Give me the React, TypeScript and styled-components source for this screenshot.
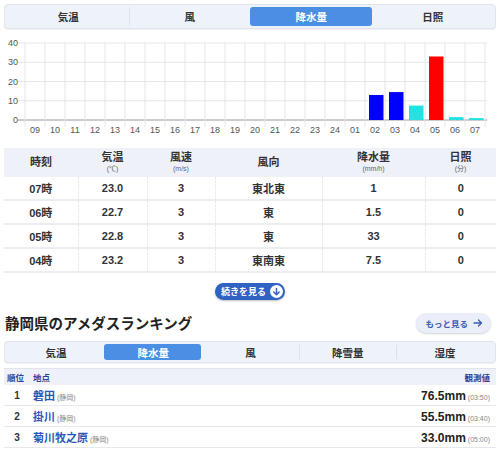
import React from "react";
import styled, { createGlobalStyle } from "styled-components";

const GlobalStyle = createGlobalStyle`
  body {
    margin: 0;
    background: #fff;
    color: #333;
    font-family: "Liberation Sans", "Noto Sans CJK JP", sans-serif;
  }
`;

const Page = styled.div`
  width: 492px;
  padding: 4px;
`;

const TabBar = styled.div<{ $height: number }>`
  display: flex;
  height: ${(p) => p.$height}px;
  box-sizing: border-box;
  padding: 2px;
  background: #eef2f9;
  border: 1px solid #dfe4ee;
  border-radius: 4px;
  box-shadow: 0 1px 1px rgba(0, 0, 0, 0.06);
`;

const Tab = styled.div<{ $active?: boolean; $sep?: boolean }>`
  flex: 1;
  display: flex;
  align-items: center;
  justify-content: center;
  font-size: 10.5px;
  font-weight: bold;
  color: ${(p) => (p.$active ? "#fff" : "#333")};
  background: ${(p) => (p.$active ? "#4a8fe4" : "transparent")};
  border-radius: 3px;
  border-left: 1px solid ${(p) => (p.$sep ? "#dde3ee" : "transparent")};
`;

const Chart = styled.svg`
  display: block;
  width: 492px;
  height: 111px;
`;

const DataTable = styled.table`
  width: 492px;
  margin-top: 8px;
  border-collapse: collapse;
  table-layout: fixed;
`;

const HeadCell = styled.th<{ width: number }>`
  width: ${(p) => p.width}px;
  height: 29px;
  padding: 0;
  background: #eef1f8;
  font-size: 11px;
  font-weight: bold;
  color: #333;
  line-height: 11px;
  text-align: center;
`;

const Unit = styled.div`
  margin-top: 2px;
  font-size: 7px;
  font-weight: normal;
  color: #666;
  line-height: 8px;
`;

const Cell = styled.td`
  height: 22px;
  padding: 0;
  font-size: 11px;
  font-weight: bold;
  color: #333;
  text-align: center;
  border-bottom: 2px solid #eceef2;
  & + & {
    border-left: 1px dotted #e2e2e2;
  }
`;

const ButtonRow = styled.div`
  display: flex;
  justify-content: center;
  margin-top: 10px;
`;

const MoreButton = styled.div`
  display: inline-flex;
  align-items: center;
  gap: 4px;
  height: 17px;
  padding: 0 2px 0 6px;
  background: #2f62c2;
  border-radius: 9px;
  color: #fff;
  font-size: 9px;
  font-weight: bold;
  box-shadow: 0 1px 2px rgba(0, 0, 0, 0.25);
`;

const ArrowCircle = styled.span`
  display: flex;
  align-items: center;
  justify-content: center;
  width: 13px;
  height: 13px;
  border-radius: 50%;
  background: #fff;
`;

const SectionHead = styled.div`
  display: flex;
  align-items: center;
  justify-content: space-between;
  height: 20px;
  margin-top: 13px;
  margin-bottom: 8px;
`;

const Heading = styled.h2`
  margin: -2px 0 0 1px;
  font-size: 14.5px;
  font-weight: bold;
  color: #222;
`;

const LinkButton = styled.div`
  display: flex;
  align-items: center;
  gap: 5px;
  height: 20px;
  margin-right: 5px;
  padding: 0 8px 0 9px;
  background: #e9eef8;
  border-radius: 10px;
  color: #3a5eb4;
  font-size: 8.5px;
  font-weight: bold;
  box-shadow: 0 1px 2px rgba(0, 0, 0, 0.18);
`;

const RankTable = styled.table`
  width: 492px;
  margin-top: 5px;
  border-collapse: collapse;
  table-layout: fixed;
`;

const RankHead = styled.th<{ width?: number; $align?: string }>`
  width: ${(p) => (p.width ? `${p.width}px` : "auto")};
  height: 16px;
  padding: ${(p) => (p.$align === "right" ? "0 6px 0 0" : "0 0 0 3px")};
  background: #eef1f8;
  border-top: 1px solid #dfe4ee;
  font-size: 8.5px;
  font-weight: bold;
  color: #27469a;
  text-align: ${(p) => p.$align || "left"};
`;

const RankCell = styled.td<{ $align?: string }>`
  height: 20px;
  padding: ${(p) => (p.$align === "right" ? "0 6px 0 0" : "0 0 0 3px")};
  border-bottom: 1px solid #e6e8ec;
  text-align: ${(p) => p.$align || "left"};
  white-space: nowrap;
`;

const RankNo = styled.span`
  display: block;
  margin-left: -3px;
  text-align: center;
  font-size: 10px;
  font-weight: bold;
  color: #333;
`;

const Place = styled.span`
  font-size: 11px;
  font-weight: bold;
  color: #2b58b8;
`;

const Note = styled.span`
  margin-left: 2px;
  font-size: 7px;
  font-weight: normal;
  color: #888;
`;

const Value = styled.span`
  font-size: 12px;
  font-weight: bold;
  color: #222;
`;

const hours = [
  "09", "10", "11", "12", "13", "14", "15", "16", "17", "18", "19", "20",
  "21", "22", "23", "24", "01", "02", "03", "04", "05", "06", "07",
];

const rain: Record<string, number> = {
  "02": 13,
  "03": 14.5,
  "04": 7.5,
  "05": 33,
  "06": 1.5,
  "07": 1,
};

const barColor = (v: number) => {
  if (v >= 20) return "#ff0000";
  if (v >= 10) return "#0000ff";
  return "#22e2e2";
};

const yFor = (v: number) => 91 - v * 1.925;

const RainChart: React.FC = () => (
  <Chart viewBox="0 0 492 111">
    {[0, 10, 20, 30, 40].map((v) => (
      <g key={v}>
        <line
          x1={14}
          x2={483}
          y1={yFor(v)}
          y2={yFor(v)}
          stroke={v === 0 ? "#9a9a9a" : "#e6e6e6"}
          strokeWidth={1}
        />
        <text
          x={14}
          y={yFor(v) + 3}
          textAnchor="end"
          fontSize={9}
          fill="#555"
          fontFamily="Liberation Sans, sans-serif"
        >
          {v}
        </text>
      </g>
    ))}
    {Array.from({ length: 24 }).map((_, i) => (
      <line
        key={i}
        x1={21 + 20 * i}
        x2={21 + 20 * i}
        y1={14}
        y2={98}
        stroke="#e6e6e6"
        strokeWidth={1}
      />
    ))}
    {hours.map((h, i) => (
      <g key={h}>
        <text
          x={31 + 20 * i}
          y={104}
          textAnchor="middle"
          fontSize={9}
          fill="#555"
          fontFamily="Liberation Sans, sans-serif"
        >
          {h}
        </text>
        {rain[h] !== undefined && (
          <rect
            x={25 + 20 * i}
            y={yFor(rain[h])}
            width={14.5}
            height={91 - yFor(rain[h])}
            fill={barColor(rain[h])}
          />
        )}
      </g>
    ))}
  </Chart>
);

const columns = [
  { label: "時刻", width: 74 },
  { label: "気温", unit: "(℃)", width: 69 },
  { label: "風速", unit: "(m/s)", width: 68 },
  { label: "風向", width: 107 },
  { label: "降水量", unit: "(mm/h)", width: 103 },
  { label: "日照", unit: "(分)", width: 71 },
];

const rows = [
  ["07時", "23.0", "3", "東北東", "1", "0"],
  ["06時", "22.7", "3", "東", "1.5", "0"],
  ["05時", "22.8", "3", "東", "33", "0"],
  ["04時", "23.2", "3", "東南東", "7.5", "0"],
];

const ranking = [
  { no: 1, place: "磐田", value: "76.5mm", time: "(03:50)" },
  { no: 2, place: "掛川", value: "55.5mm", time: "(03:40)" },
  { no: 3, place: "菊川牧之原", value: "33.0mm", time: "(05:00)" },
];

const topTabs = ["気温", "風", "降水量", "日照"];
const rankTabs = ["気温", "降水量", "風", "降雪量", "湿度"];

const Tabs: React.FC<{ items: string[]; active: number; height: number }> = ({
  items,
  active,
  height,
}) => (
  <TabBar $height={height}>
    {items.map((t, i) => (
      <Tab
        key={t}
        $active={i === active}
        $sep={i > 0 && i !== active && i - 1 !== active}
      >
        {t}
      </Tab>
    ))}
  </TabBar>
);

const App: React.FC = () => (
  <>
    <GlobalStyle />
    <Page>
      <Tabs items={topTabs} active={2} height={25} />
      <RainChart />
      <DataTable>
        <thead>
          <tr>
            {columns.map((c) => (
              <HeadCell key={c.label} width={c.width}>
                {c.label}
                {c.unit && <Unit>{c.unit}</Unit>}
              </HeadCell>
            ))}
          </tr>
        </thead>
        <tbody>
          {rows.map((r) => (
            <tr key={r[0]}>
              {r.map((v, i) => (
                <Cell key={i}>{v}</Cell>
              ))}
            </tr>
          ))}
        </tbody>
      </DataTable>
      <ButtonRow>
        <MoreButton>
          続きを見る
          <ArrowCircle>
            <svg width="9" height="9" viewBox="0 0 10 10">
              <path
                d="M5 1.5v7M2 5.5l3 3 3-3"
                fill="none"
                stroke="#2f62c2"
                strokeWidth="1.6"
                strokeLinecap="round"
                strokeLinejoin="round"
              />
            </svg>
          </ArrowCircle>
        </MoreButton>
      </ButtonRow>
      <SectionHead>
        <Heading>静岡県のアメダスランキング</Heading>
        <LinkButton>
          もっと見る
          <svg width="10" height="8" viewBox="0 0 10 8">
            <path
              d="M1 4h7.5M5.5 1l3 3-3 3"
              fill="none"
              stroke="#3a5eb4"
              strokeWidth="1.3"
              strokeLinecap="round"
              strokeLinejoin="round"
            />
          </svg>
        </LinkButton>
      </SectionHead>
      <Tabs items={rankTabs} active={1} height={22} />
      <RankTable>
        <thead>
          <tr>
            <RankHead width={23}>順位</RankHead>
            <RankHead>地点</RankHead>
            <RankHead width={150} $align="right">
              観測値
            </RankHead>
          </tr>
        </thead>
        <tbody>
          {ranking.map((r) => (
            <tr key={r.no}>
              <RankCell>
                <RankNo>{r.no}</RankNo>
              </RankCell>
              <RankCell>
                <Place>{r.place}</Place>
                <Note>(静岡)</Note>
              </RankCell>
              <RankCell $align="right">
                <Value>{r.value}</Value>
                <Note>{r.time}</Note>
              </RankCell>
            </tr>
          ))}
        </tbody>
      </RankTable>
    </Page>
  </>
);

export default App;
